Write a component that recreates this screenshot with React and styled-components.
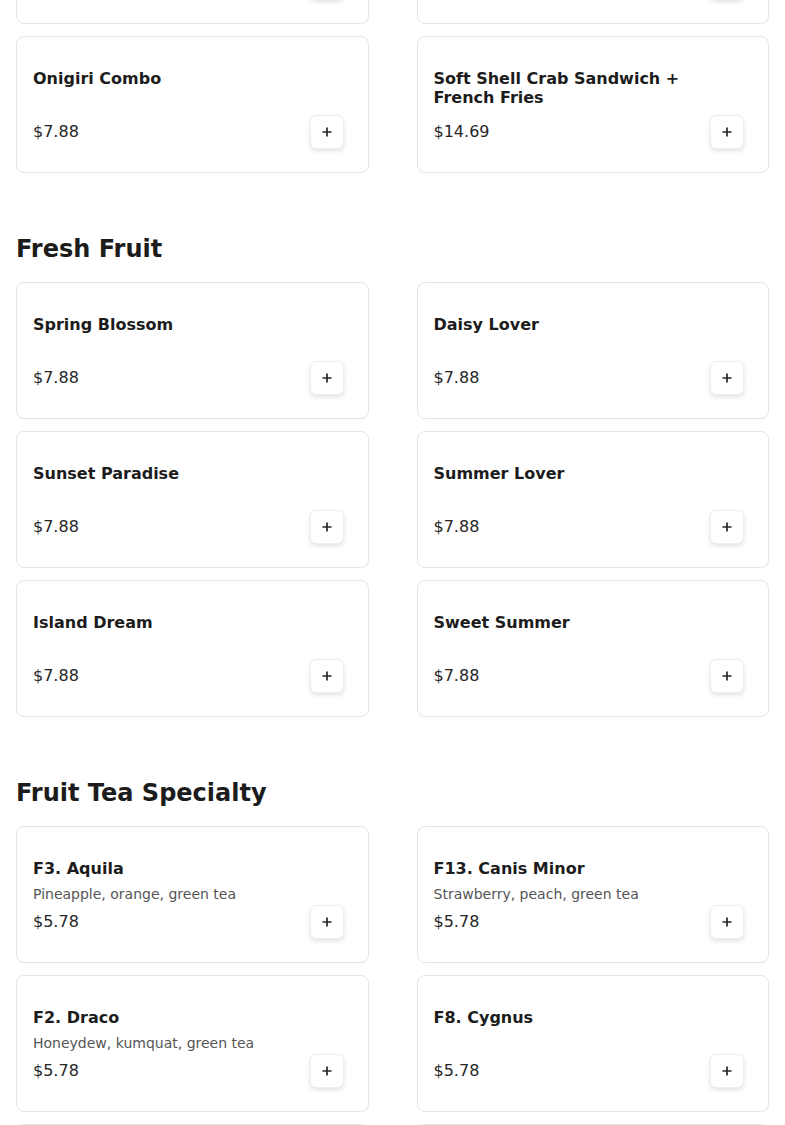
import styled, { createGlobalStyle } from 'styled-components';

const GlobalStyle = createGlobalStyle`
    * {
        box-sizing: border-box;
    }
    body {
        margin: 0;
        background: #FFFFFF;
        font-family: "DejaVu Sans", "Noto Sans", sans-serif;
        color: #1a1a1a;
    }
`;

const menu = [
    {
        title: null,
        items: [
            { name: 'Chicken Katsu Combo', price: '7.88' },
            { name: 'Salmon Bento Box', price: '9.88' },
            { name: 'Onigiri Combo', price: '7.88' },
            { name: 'Soft Shell Crab Sandwich + French Fries', price: '14.69' },
        ],
    },
    {
        title: 'Fresh Fruit',
        items: [
            { name: 'Spring Blossom', price: '7.88' },
            { name: 'Daisy Lover', price: '7.88' },
            { name: 'Sunset Paradise', price: '7.88' },
            { name: 'Summer Lover', price: '7.88' },
            { name: 'Island Dream', price: '7.88' },
            { name: 'Sweet Summer', price: '7.88' },
        ],
    },
    {
        title: 'Fruit Tea Specialty',
        items: [
            { name: 'F3. Aquila', desc: 'Pineapple, orange, green tea', price: '5.78' },
            { name: 'F13. Canis Minor', desc: 'Strawberry, peach, green tea', price: '5.78' },
            { name: 'F2. Draco', desc: 'Honeydew, kumquat, green tea', price: '5.78' },
            { name: 'F8. Cygnus', price: '5.78' },
            { name: 'F1. Lyra', desc: 'Mango, passion fruit, green tea', price: '5.78' },
            { name: 'F5. Orion', desc: 'Grapefruit, lemon, jasmine tea', price: '5.78' },
        ],
    },
];

function PlusIcon() {
    return (
        <svg width="10" height="10" viewBox="0 0 10 10" fill="none">
            <path d="M5 0.5v9M0.5 5h9" stroke="#262626" strokeWidth="1.7" />
        </svg>
    );
}

function ItemCard({ item }) {
    return (
        <Card>
            <Info>
                <ItemName>{item.name}</ItemName>
                {item.desc && <ItemDesc>{item.desc}</ItemDesc>}
            </Info>
            <Footer>
                <Price>${item.price}</Price>
                <AddButton aria-label={`Add ${item.name}`}>
                    <PlusIcon />
                </AddButton>
            </Footer>
        </Card>
    );
}

export default function App() {
    return (
        <>
            <GlobalStyle />
            <Page>
                {menu.map((section, i) => (
                    <Section key={i}>
                        {section.title && <SectionTitle>{section.title}</SectionTitle>}
                        <Grid>
                            {section.items.map((item) => (
                                <ItemCard key={item.name} item={item} />
                            ))}
                        </Grid>
                    </Section>
                ))}
            </Page>
        </>
    );
}

const Page = styled.div`
    margin-top: -113px;
    padding: 0 16px 40px;
`;

const Section = styled.section`
    display: flex;
    flex-direction: column;
`;

const SectionTitle = styled.h2`
    margin: 61px 0 18px;
    font-size: 24px;
    line-height: 30px;
    font-weight: bold;
    color: #1c1c1c;
`;

const Grid = styled.div`
    display: grid;
    grid-template-columns: 1fr 1fr;
    column-gap: 48px;
    row-gap: 12px;
`;

const Card = styled.div`
    display: flex;
    flex-direction: column;
    justify-content: space-between;
    height: 137px;
    padding: 32px 24px 23px 16px;
    background: #FFFFFF;
    border: 1px solid #e4e4e4;
    border-radius: 8px;
`;

const Info = styled.div`
    display: flex;
    flex-direction: column;
    gap: 8px;
    padding-right: 40px;
`;

const ItemName = styled.div`
    font-size: 16px;
    line-height: 19px;
    font-weight: bold;
    color: #1c1c1c;
`;

const ItemDesc = styled.div`
    font-size: 14px;
    line-height: 17px;
    color: #555555;
`;

const Footer = styled.div`
    display: flex;
    justify-content: space-between;
    align-items: center;
`;

const Price = styled.div`
    font-size: 16px;
    line-height: 19px;
    color: #262626;
`;

const AddButton = styled.button`
    display: flex;
    align-items: center;
    justify-content: center;
    width: 34px;
    height: 34px;
    margin-top: 2px;
    padding: 0;
    background: #FFFFFF;
    border: 1px solid #eeeeee;
    border-radius: 6px;
    box-shadow: 0px 2px 4px rgba(0, 0, 0, 0.12);
    cursor: pointer;
`;
